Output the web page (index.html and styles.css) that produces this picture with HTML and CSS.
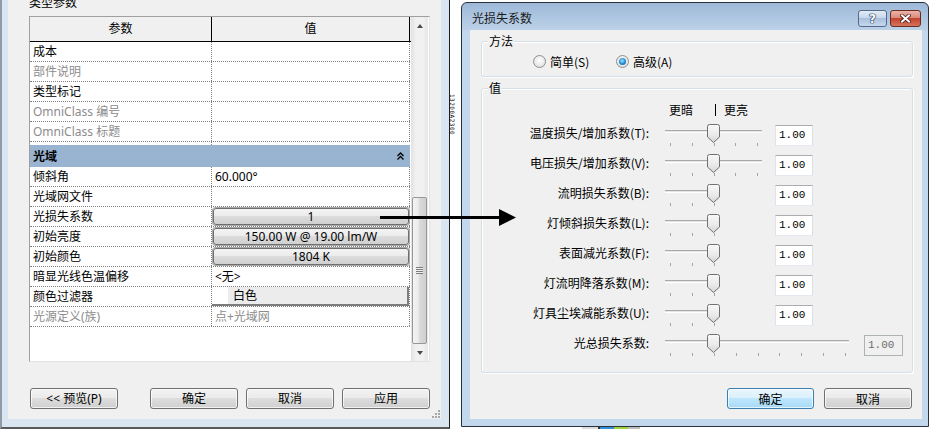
FILE: index.html
```html
<!DOCTYPE html>
<html lang="zh-CN">
<head>
    <meta charset="UTF-8">
    <meta name="viewport" content="width=device-width, initial-scale=1.0">
    <title>光损失系数</title>
    <link rel="stylesheet" href="styles.css">
</head>
<body>
    <svg class="defs" width="0" height="0">
        <defs>
            <linearGradient id="thumbFill" x1="0" y1="0" x2="0" y2="1">
                <stop offset="0" stop-color="#f8f8f8"/>
                <stop offset="0.55" stop-color="#ebebeb"/>
                <stop offset="1" stop-color="#d4d4d4"/>
            </linearGradient>
            <symbol id="thumb" viewBox="0 0 13 19">
                <path d="M0.5 2.5 Q0.5 0.5 2.5 0.5 H10.5 Q12.5 0.5 12.5 2.5 V13 L6.5 18.5 L0.5 13 Z" fill="url(#thumbFill)" stroke="#707070"/>
            </symbol>
        </defs>
    </svg>

    <!-- type properties window, behind -->
    <div class="win-left">
        <div class="left-body">
            <div class="caption">类型参数</div>
            <div class="grid-box">
                <div class="grid">
                    <div class="grid-head"><div class="c1">参数</div><div class="c2">值</div></div>
                    <div class="row"><div class="c1">成本</div><div class="c2"></div></div>
                    <div class="row ro"><div class="c1">部件说明</div><div class="c2"></div></div>
                    <div class="row"><div class="c1">类型标记</div><div class="c2"></div></div>
                    <div class="row ro"><div class="c1">OmniClass 编号</div><div class="c2"></div></div>
                    <div class="row ro"><div class="c1">OmniClass 标题</div><div class="c2"></div></div>
                    <div class="gap"><div class="c1"></div></div>
                    <div class="group">
                        <span>光域</span>
                        <svg width="7" height="8" viewBox="0 0 7 8"><path d="M0.5 4 L3.5 1 L6.5 4 M0.5 7.5 L3.5 4.5 L6.5 7.5" fill="none" stroke="#000" stroke-width="1.4"/></svg>
                    </div>
                    <div class="row"><div class="c1">倾斜角</div><div class="c2">60.000°</div></div>
                    <div class="row"><div class="c1">光域网文件</div><div class="c2"></div></div>
                    <div class="row"><div class="c1">光损失系数</div><div class="c2 pad"><div class="cell-btn">1</div></div></div>
                    <div class="row"><div class="c1">初始亮度</div><div class="c2 pad"><div class="cell-btn">150.00 W @ 19.00 lm/W</div></div></div>
                    <div class="row"><div class="c1">初始颜色</div><div class="c2 pad"><div class="cell-btn">1804 K</div></div></div>
                    <div class="row"><div class="c1">暗显光线色温偏移</div><div class="c2">&lt;无&gt;</div></div>
                    <div class="row"><div class="c1">颜色过滤器</div><div class="c2 flat"><div class="color-btn"><span class="swatch"></span>白色</div></div></div>
                    <div class="row ro"><div class="c1">光源定义(族)</div><div class="c2">点+光域网</div></div>
                </div>
                <div class="vscroll">
                    <div class="sb-arrow"><span class="tri-up"></span></div>
                    <div class="sb-track">
                        <div class="sb-thumb"><span class="grip-lines"></span></div>
                    </div>
                    <div class="sb-arrow"><span class="tri-down"></span></div>
                </div>
            </div>
            <div class="left-buttons">
                <div class="btn">&lt;&lt; 预览(P)</div>
                <div class="btn ok">确定</div>
                <div class="btn">取消</div>
                <div class="btn">应用</div>
            </div>
            <svg class="size-grip" width="10" height="10" viewBox="0 0 10 10">
                <g fill="#a6a6a6">
                    <rect x="7" y="1" width="2" height="2"/>
                    <rect x="4" y="4" width="2" height="2"/><rect x="7" y="4" width="2" height="2"/>
                    <rect x="1" y="7" width="2" height="2"/><rect x="4" y="7" width="2" height="2"/><rect x="7" y="7" width="2" height="2"/>
                </g>
            </svg>
        </div>
    </div>

    <div class="tag">13200A2300</div>
    <div class="taskbar-bit"></div>

    <!-- light loss factor dialog -->
    <div class="win-right">
        <div class="titlebar">
            <div class="title">光损失系数</div>
            <div class="tb-btn tb-help">?</div>
            <div class="tb-btn tb-close">
                <svg width="11" height="9" viewBox="0 0 11 9">
                    <path d="M2 1.5 L9 7.5 M9 1.5 L2 7.5" stroke="#4a1a14" stroke-width="3.6" stroke-linecap="square"/>
                    <path d="M2 1.5 L9 7.5 M9 1.5 L2 7.5" stroke="#fff" stroke-width="2" stroke-linecap="square"/>
                </svg>
            </div>
        </div>
        <div class="dlg-body">
            <div class="gbox method">
                <span class="legend">方法</span>
                <label class="radio"><i></i>简单(S)</label>
                <label class="radio on"><i></i>高级(A)</label>
            </div>

            <div class="gbox values">
                <span class="legend">值</span>
                <div class="scale-head"><span>更暗</span><span class="mid"></span><span>更亮</span></div>

                <div class="vrow">
                    <div class="vlabel">温度损失/增加系数(T):</div>
                    <div class="slider"><div class="track"></div><div class="ticks"><i></i><i></i><i></i><i></i><i></i></div><svg class="thumb"><use href="#thumb"/></svg></div>
                    <div class="vinput">1.00</div>
                </div>
                <div class="vrow">
                    <div class="vlabel">电压损失/增加系数(V):</div>
                    <div class="slider"><div class="track"></div><div class="ticks"><i></i><i></i><i></i><i></i><i></i></div><svg class="thumb"><use href="#thumb"/></svg></div>
                    <div class="vinput">1.00</div>
                </div>
                <div class="vrow">
                    <div class="vlabel">流明损失系数(B):</div>
                    <div class="slider short"><div class="track"></div><div class="ticks"><i></i><i></i><i></i></div><svg class="thumb"><use href="#thumb"/></svg></div>
                    <div class="vinput">1.00</div>
                </div>
                <div class="vrow">
                    <div class="vlabel">灯倾斜损失系数(L):</div>
                    <div class="slider short"><div class="track"></div><div class="ticks"><i></i><i></i><i></i></div><svg class="thumb"><use href="#thumb"/></svg></div>
                    <div class="vinput">1.00</div>
                </div>
                <div class="vrow">
                    <div class="vlabel">表面减光系数(F):</div>
                    <div class="slider short"><div class="track"></div><div class="ticks"><i></i><i></i><i></i></div><svg class="thumb"><use href="#thumb"/></svg></div>
                    <div class="vinput">1.00</div>
                </div>
                <div class="vrow">
                    <div class="vlabel">灯流明降落系数(M):</div>
                    <div class="slider short"><div class="track"></div><div class="ticks"><i></i><i></i><i></i></div><svg class="thumb"><use href="#thumb"/></svg></div>
                    <div class="vinput">1.00</div>
                </div>
                <div class="vrow">
                    <div class="vlabel">灯具尘埃减能系数(U):</div>
                    <div class="slider short"><div class="track"></div><div class="ticks"><i></i><i></i><i></i></div><svg class="thumb"><use href="#thumb"/></svg></div>
                    <div class="vinput">1.00</div>
                </div>
                <div class="vrow">
                    <div class="vlabel">光总损失系数:</div>
                    <div class="slider long"><div class="track"></div><div class="ticks"><i></i><i></i><i></i><i></i><i></i><i></i><i></i><i></i><i></i></div><svg class="thumb"><use href="#thumb"/></svg></div>
                    <div class="vinput off">1.00</div>
                </div>
            </div>

            <div class="dlg-buttons">
                <div class="btn default">确定</div>
                <div class="btn">取消</div>
            </div>
        </div>
    </div>

    <svg class="arrow" width="138" height="19" viewBox="0 0 138 19">
        <path d="M0 9.5 H122" stroke="#000" stroke-width="3"/>
        <path d="M119 1 L136 9.5 L119 18 Z" fill="#000"/>
    </svg>
</body>
</html>
```

FILE: styles.css
```css
* {
    box-sizing: border-box;
}
body {
    margin: 0;
    width: 930px;
    height: 429px;
    overflow: hidden;
    position: relative;
    background: #fff;
    font-family: "Noto Sans", "Noto Sans CJK SC", sans-serif;
    font-size: 12px;
    color: #000;
}
.defs {
    position: absolute;
}

/* ---- left window ---- */
.win-left {
    position: absolute;
    left: 0;
    top: -40px;
    width: 450px;
    height: 469px;
    background: #dae5f2;
    border-left: 2px solid #8f9aa6;
    border-right: 1px solid #1e1e1e;
    border-bottom: 2px solid #5a5a5a;
    padding: 0 8px 8px 6px;
}
.left-body {
    position: relative;
    height: 100%;
    background: #f0f0f0;
    padding: 35px 0 0 21px;
}
.caption {
    height: 16px;
    line-height: 16px;
}
.grid-box {
    display: flex;
    width: 401px;
    height: 346px;
    margin-top: 5px;
    background: #fff;
    border: 1px solid;
    border-color: #a0a0a0 #e3e3e3 #e3e3e3 #a0a0a0;
}
.grid {
    width: 381px;
    flex: none;
}
.c1 {
    width: 182px;
    flex: none;
    white-space: nowrap;
}
.c2 {
    width: 198px;
    flex: none;
    white-space: nowrap;
}
.grid-head {
    display: flex;
    height: 25px;
    background: #f0f0f0;
    border-bottom: 1px solid #000;
}
.grid-head div {
    line-height: 24px;
    text-align: center;
    border-right: 1px solid #000;
}
.row {
    display: flex;
    width: 380px;
    height: 20px;
    border-bottom: 1px dotted #808080;
}
.row .c1 {
    border-right: 1px dotted #808080;
    padding-left: 3px;
    line-height: 19px;
}
.row .c2 {
    border-right: 1px dotted #808080;
    padding-left: 3px;
    line-height: 19px;
}
.row .c2.pad {
    padding: 1px 0 0 1px;
}
.row .c2.flat {
    padding: 0;
}
.row.ro {
    color: #8c8c8c;
}
.gap {
    display: flex;
    height: 3px;
}
.gap .c1 {
    border-right: 1px dotted #808080;
}
.group {
    display: flex;
    justify-content: space-between;
    align-items: center;
    width: 380px;
    height: 22px;
    padding: 0 6px 0 3px;
    background: #99b4d1;
    font-weight: bold;
}
.cell-btn {
    height: 17px;
    border: 1px solid #6f6f6f;
    border-radius: 3px;
    box-shadow: 0 0 0 1px #a8a8a8;
    background: linear-gradient(#f3f3f3 0%, #ebebeb 49%, #dcdcdc 50%, #d0d0d0 100%);
    text-align: center;
    line-height: 15px;
}
.color-btn {
    display: flex;
    height: 19px;
    background: #ececec;
    border-right: 2px solid #7d7d7d;
    border-bottom: 2px solid #7d7d7d;
    line-height: 18px;
}
.color-btn .swatch {
    width: 16px;
    margin-right: 5px;
    background: #fff;
}

/* scrollbar */
.vscroll {
    width: 17px;
    display: flex;
    flex-direction: column;
    background: linear-gradient(90deg, #e2e2e2, #f1f1f1 30%, #f1f1f1 70%, #e6e6e6);
}
.sb-arrow {
    height: 17px;
    flex: none;
    display: flex;
    align-items: center;
    justify-content: center;
}
.tri-up {
    border-left: 3.5px solid transparent;
    border-right: 3.5px solid transparent;
    border-bottom: 4px solid #4a4a4a;
}
.tri-down {
    border-left: 3.5px solid transparent;
    border-right: 3.5px solid transparent;
    border-top: 4px solid #4a4a4a;
}
.sb-track {
    flex: 1;
}
.sb-thumb {
    width: 15px;
    height: 147px;
    margin: 163px 0 0 1px;
    border: 1px solid #979797;
    border-radius: 2px;
    background: linear-gradient(90deg, #f4f4f4, #e9e9e9 45%, #dadada 50%, #cfcfcf);
    display: flex;
    align-items: center;
    justify-content: center;
}
.grip-lines {
    width: 7px;
    height: 7px;
    background: repeating-linear-gradient(#7c7c7c 0 1px, #f0f0f0 1px 2px);
}

/* buttons */
.btn {
    width: 88px;
    height: 21px;
    border: 1px solid #707070;
    border-radius: 3px;
    background: linear-gradient(#f2f2f2 0%, #ebebeb 49%, #dddddd 50%, #cfcfcf 100%);
    box-shadow: inset 0 0 0 1px rgba(255, 255, 255, 0.7);
    text-align: center;
    line-height: 19px;
}
.left-buttons {
    display: flex;
    margin-top: 26px;
    padding-left: 1px;
}
.left-buttons .btn + .btn {
    margin-left: 8px;
}
.left-buttons .btn.ok {
    margin-left: 32px;
}
.size-grip {
    position: absolute;
    right: 0;
    bottom: 0;
}

.tag {
    position: absolute;
    left: 449px;
    top: 94px;
    writing-mode: vertical-rl;
    font: 6px "DejaVu Sans Mono", monospace;
    letter-spacing: 0.5px;
}
.taskbar-bit {
    position: absolute;
    left: 582px;
    top: 427px;
    width: 58px;
    height: 2px;
    background: linear-gradient(90deg, #dcdcdc 0 16px, #333 16px 18px, #2f8fd8 18px 32px, #9fd23a 32px 46px, #bdbdbd 46px);
}

/* ---- right dialog ---- */
.win-right {
    position: absolute;
    left: 461px;
    top: 2px;
    width: 468px;
    height: 425px;
    display: flex;
    flex-direction: column;
    border: 1px solid #2b3138;
    border-radius: 6px 6px 0 0;
    padding: 0 6px 7px 8px;
    background: linear-gradient(#9db9d8 0, #bcd1e8 27px, #c3d7ed 28px);
    font-family: "Noto Sans CJK SC", sans-serif;
}
.titlebar {
    display: flex;
    height: 27px;
    flex: none;
}
.title {
    margin: 7px 0 0 2px;
    line-height: 16px;
    color: #1a1a1a;
}
.tb-btn {
    margin-top: 7px;
    height: 17px;
    border-radius: 3px;
    display: flex;
    align-items: center;
    justify-content: center;
}
.tb-help {
    margin-left: auto;
    width: 29px;
    border: 1px solid #56698a;
    background: linear-gradient(#e3ecf7, #c8d8ec 45%, #a9c0dd 50%, #c5d8ef);
    color: #fff;
    font: bold 12px "DejaVu Sans", sans-serif;
    text-shadow: 0 0 1px #1f334d, 0 0 1px #1f334d, 0 0 1px #1f334d, 0 0 1px #1f334d;
}
.tb-close {
    width: 31px;
    margin: 7px 1px 0 3px;
    border: 1px solid #6b2a22;
    background: linear-gradient(#ebb3a7, #d98b7b 45%, #c4432e 50%, #d5745d);
}
.dlg-body {
    flex: 1;
    background: #f0f0f0;
    padding: 11px 9px 0 11px;
}
.gbox {
    position: relative;
    border: 1px solid #d5dfe5;
    border-radius: 3px;
    box-shadow: inset 1px 1px 0 #fff, 1px 1px 0 #fff;
}
.gbox .legend {
    position: absolute;
    left: 6px;
    top: -8px;
    padding: 0 1px;
    background: #f0f0f0;
    line-height: 14px;
}
.method {
    display: flex;
    height: 36px;
    padding: 11px 0 0 51px;
}
.radio {
    display: flex;
    align-items: center;
    width: 83px;
    height: 16px;
}
.radio i {
    display: flex;
    align-items: center;
    justify-content: center;
    width: 13px;
    height: 13px;
    margin-right: 4px;
    border: 1px solid #8e8f8f;
    border-radius: 50%;
    background: radial-gradient(circle at 50% 40%, #ffffff, #e6e6e6 65%, #cfcfcf);
}
.radio.on i::after {
    content: "";
    width: 7px;
    height: 7px;
    border-radius: 50%;
    background: radial-gradient(circle at 45% 40%, #9be4ff, #2289cf 55%, #0e4f86);
}
.values {
    height: 285px;
    margin-top: 11px;
    padding-top: 13px;
}
.scale-head {
    display: flex;
    height: 16px;
    line-height: 16px;
    padding-left: 187px;
}
.scale-head .mid {
    width: 1px;
    height: 12px;
    margin: 2px 8px 0 22px;
    background: #000;
}
.vrow {
    display: flex;
    height: 30px;
}
.vlabel {
    width: 167px;
    flex: none;
    text-align: right;
    line-height: 30px;
    white-space: nowrap;
}
.slider {
    position: relative;
    width: 100px;
    height: 30px;
    flex: none;
    margin-left: 14px;
    padding-top: 12px;
}
.slider.long {
    width: 188px;
}
.track {
    width: 97px;
    height: 3px;
    margin-left: 2px;
    border-top: 1px solid #a9a9a9;
    border-bottom: 1px solid #fff;
    background: #e4e6e6;
}
.slider.short .track {
    width: 48px;
}
.slider.long .track {
    width: 184px;
}
.ticks {
    display: flex;
    justify-content: space-between;
    width: 88px;
    height: 3px;
    margin: 10px 0 0 7px;
}
.ticks i {
    width: 1px;
    background: #a4a4a4;
}
.slider.short .ticks {
    width: 45px;
}
.slider.long .ticks {
    width: 176px;
}
.thumb {
    position: absolute;
    left: 44px;
    top: 6px;
    width: 13px;
    height: 19px;
}
.vinput {
    width: 38px;
    height: 21px;
    margin: 7px 0 0 12px;
    padding-left: 3px;
    border: 1px solid;
    border-color: #abadb3 #dbdfe6 #e3e9ef #e2e3ea;
    background: #fff;
    font: 11px/19px "Liberation Mono", monospace;
}
.vinput.off {
    width: 39px;
    margin-left: 13px;
    border-color: #adb2b5;
    background: #f0f0f0;
    color: #6d6d6d;
}
.dlg-buttons {
    display: flex;
    justify-content: flex-end;
    margin: 15px 1px 0 0;
}
.dlg-buttons .btn {
    width: 87px;
}
.dlg-buttons .btn + .btn {
    width: 88px;
    margin-left: 10px;
}
.btn.default {
    border-color: #3c7fb1;
    background: linear-gradient(#eaf6fd 0%, #d9f0fc 49%, #bee6fd 50%, #a7d9f5 100%);
}

.arrow {
    position: absolute;
    left: 380px;
    top: 208px;
}
```
